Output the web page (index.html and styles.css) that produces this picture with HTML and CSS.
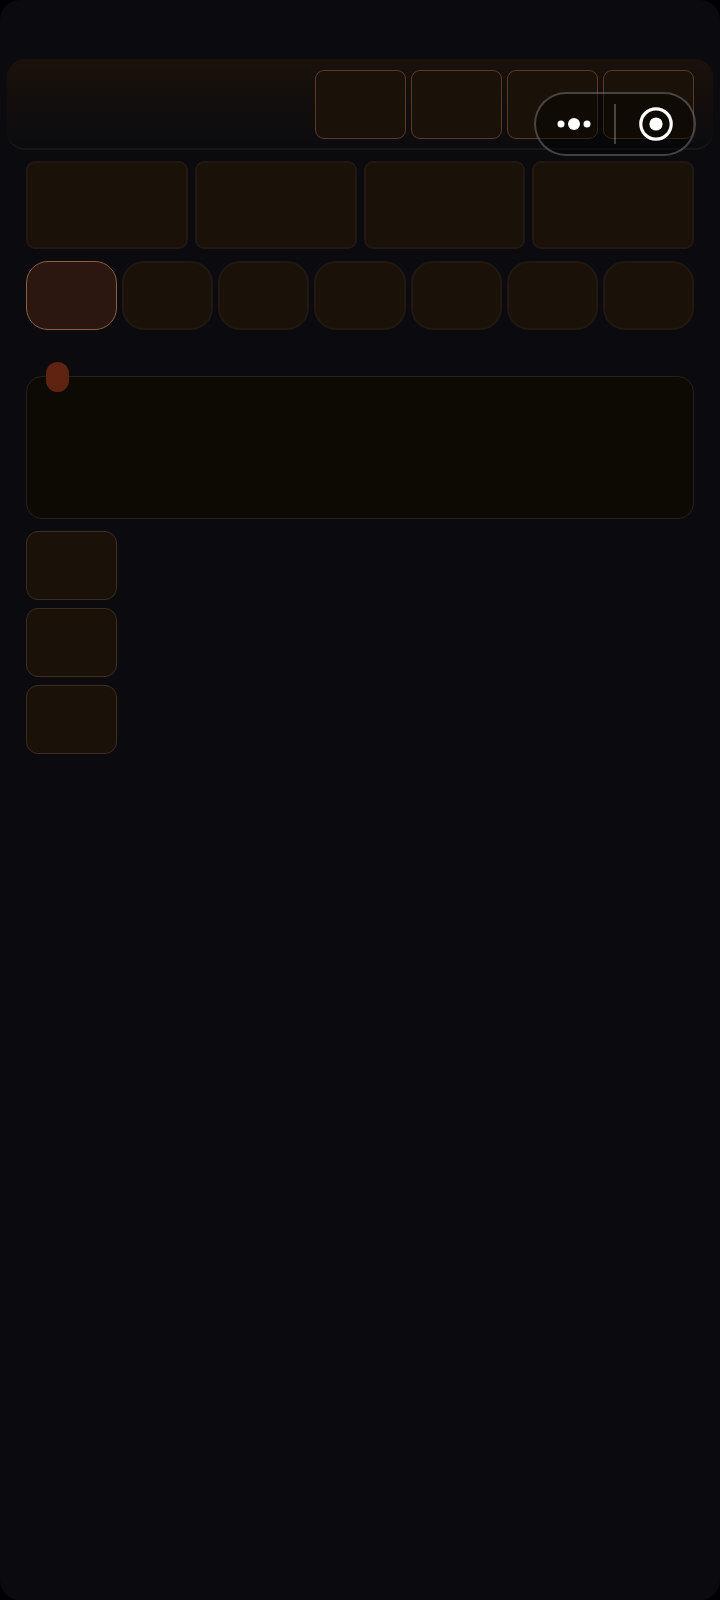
FILE: index.html
```html
<!DOCTYPE html>
<html lang="en">
<head>
<meta charset="utf-8">
<meta name="viewport" content="width=device-width, initial-scale=1">
<title>Home</title>
<link rel="stylesheet" href="styles.css">
</head>
<body>
<div class="screen">
  <header class="header">
    <button class="tile tool" type="button"></button>
    <button class="tile tool" type="button"></button>
    <button class="tile tool" type="button"></button>
    <button class="tile tool" type="button"></button>
    <div class="capsule">
      <button class="capsule-button" type="button">
        <svg width="36" height="36" viewBox="0 0 36 36" fill="#fff">
          <circle cx="4" cy="18" r="3.5"/>
          <circle cx="17" cy="18" r="6"/>
          <circle cx="30" cy="18" r="3.5"/>
        </svg>
      </button>
      <span class="capsule-divider"></span>
      <button class="capsule-button" type="button">
        <svg width="36" height="36" viewBox="0 0 36 36" fill="none">
          <circle cx="19" cy="18" r="15.2" stroke="#fff" stroke-width="3.2"/>
          <circle cx="19" cy="18" r="6.6" fill="#fff"/>
        </svg>
      </button>
    </div>
  </header>
  <main class="content">
    <section class="stats">
      <div class="tile stat"></div>
      <div class="tile stat"></div>
      <div class="tile stat"></div>
      <div class="tile stat"></div>
    </section>
    <nav class="tabs">
      <button class="tile tab tab-active" type="button"></button>
      <button class="tile tab" type="button"></button>
      <button class="tile tab" type="button"></button>
      <button class="tile tab" type="button"></button>
      <button class="tile tab" type="button"></button>
      <button class="tile tab" type="button"></button>
      <button class="tile tab" type="button"></button>
    </nav>
    <section class="panel"><span class="badge"></span></section>
    <div class="actions">
      <button class="tile action" type="button"></button>
      <button class="tile action" type="button"></button>
      <button class="tile action" type="button"></button>
    </div>
  </main>
</div>
</body>
</html>
```

FILE: styles.css
```css
* {
  box-sizing: border-box;
}

body {
  margin: 0;
  background: #000;
  font-family: "Liberation Sans", sans-serif;
}

.screen {
  min-height: 100vh;
  padding: 59px 7px 24px;
  border-radius: 20px;
  background: #0b0b0f;
}

.header {
  position: relative;
  display: flex;
  justify-content: flex-end;
  gap: 5px;
  padding: 11px 19px 9px;
  border-bottom: 2px solid #1b1514;
  border-radius: 18px;
  background: linear-gradient(#1a110a, #0b0b0f);
}

.tile {
  padding: 0;
  border: 2px solid #211812;
  background: #1a1108;
}

.tool {
  width: 91px;
  height: 69px;
  border: 1px solid #5a3a25;
  border-radius: 9px;
}

.capsule {
  position: absolute;
  top: 33px;
  right: 17px;
  display: flex;
  align-items: center;
  width: 162px;
  height: 64px;
  border: 2px solid rgba(255, 255, 255, 0.24);
  border-radius: 32px;
  background: rgba(0, 0, 0, 0.4);
}

.capsule-button {
  display: flex;
  flex: 1;
  align-items: center;
  justify-content: center;
  padding: 0;
  border: 0;
  background: none;
}

.capsule-divider {
  width: 2px;
  height: 40px;
  background: rgba(255, 255, 255, 0.24);
}

.content {
  padding: 11px 19px 0;
}

.stats {
  display: grid;
  grid-template-columns: repeat(4, 1fr);
  gap: 7px;
}

.stat {
  height: 88px;
  border-radius: 9px;
}

.tabs {
  display: grid;
  grid-template-columns: repeat(7, 1fr);
  gap: 5px;
  margin-top: 12px;
}

.tab {
  height: 69px;
  border-radius: 22px;
}

.tab-active {
  border: 1px solid #8a5f3e;
  background: #2b1610;
}

.panel {
  position: relative;
  height: 143px;
  margin-top: 46px;
  border: 1px solid #2a1f15;
  border-radius: 16px;
  background: #0d0903;
}

.badge {
  position: absolute;
  top: -15px;
  left: 19px;
  width: 23px;
  height: 30px;
  border-radius: 12px;
  background: #5f2311;
}

.actions {
  display: flex;
  flex-direction: column;
  align-items: flex-start;
  gap: 8px;
  margin-top: 12px;
}

.action {
  width: 91px;
  height: 69px;
  border: 1px solid #3b2d20;
  border-radius: 12px;
}
```
